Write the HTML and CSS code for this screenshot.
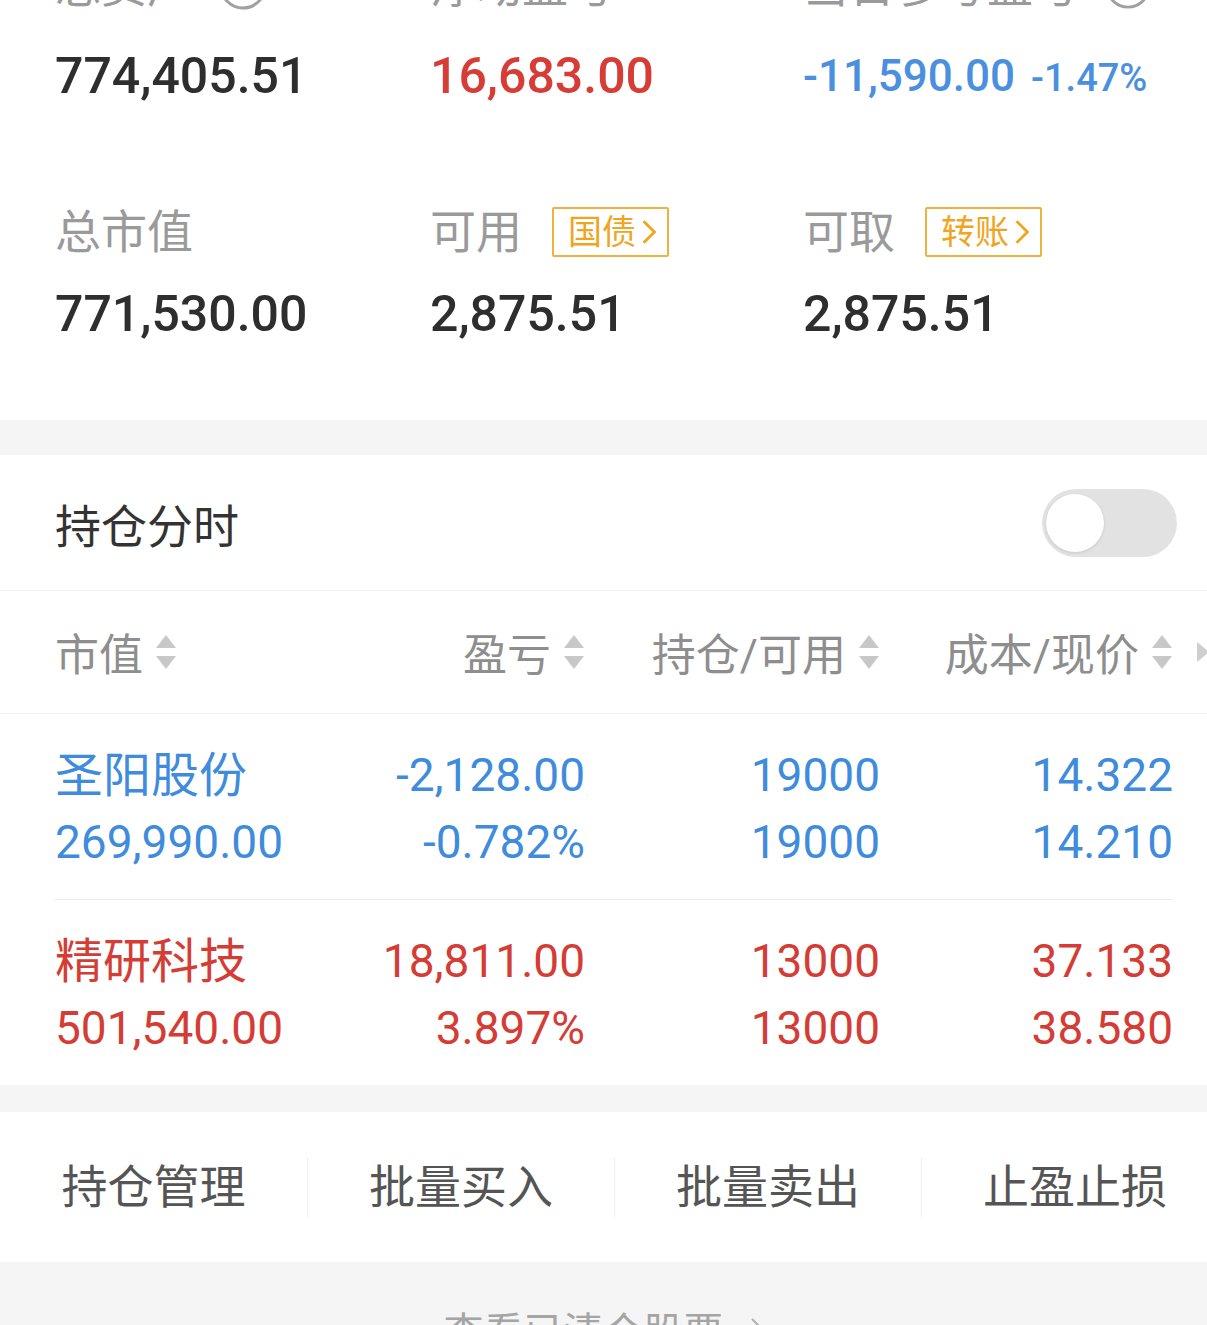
FILE: index.html
```html
<!DOCTYPE html>
<html lang="zh-CN">
<head>
<meta charset="utf-8">
<title>持仓</title>
<link rel="stylesheet" href="styles.css">
</head>
<body>
<div class="page">
  <section class="summary">
    <div class="cell">
      <div class="label">总资产
        <svg class="info" viewBox="0 0 48 48" width="48" height="48"><circle cx="24" cy="24" r="22" fill="none" stroke="#a0a0a0" stroke-width="3"/><path d="M8 24 Q24 40 40 24" fill="none" stroke="#a0a0a0" stroke-width="3"/></svg>
      </div>
      <div class="value v1">774,405.51</div>
    </div>
    <div class="cell">
      <div class="label">浮动盈亏</div>
      <div class="value v1 red">16,683.00</div>
    </div>
    <div class="cell">
      <div class="label">当日参考盈亏
        <svg class="info" viewBox="0 0 48 48" width="46" height="46"><circle cx="24" cy="24" r="22" fill="none" stroke="#a0a0a0" stroke-width="3"/><path d="M17 18 Q17 11 24 11 Q31 11 31 18 Q31 23 24 25 L24 30" fill="none" stroke="#a0a0a0" stroke-width="3"/><circle cx="24" cy="36" r="2.4" fill="#a0a0a0"/></svg>
      </div>
      <div class="value v1 blue"><span class="big">-11,590.00</span><span class="pct">-1.47%</span></div>
    </div>
    <div class="cell">
      <div class="label">总市值</div>
      <div class="value v2">771,530.00</div>
    </div>
    <div class="cell">
      <div class="label">可用<span class="badge">国债<svg viewBox="0 0 14 24" width="16" height="26"><polyline points="2,2 12,12 2,22" fill="none" stroke="#efa51f" stroke-width="2.6"/></svg></span></div>
      <div class="value v2">2,875.51</div>
    </div>
    <div class="cell">
      <div class="label">可取<span class="badge">转账<svg viewBox="0 0 14 24" width="16" height="26"><polyline points="2,2 12,12 2,22" fill="none" stroke="#efa51f" stroke-width="2.6"/></svg></span></div>
      <div class="value v2">2,875.51</div>
    </div>
  </section>

  <div class="band band-a"></div>

  <section class="positions">
    <div class="title-row">
      <span class="title">持仓分时</span>
      <span class="toggle"><span class="knob"></span></span>
    </div>
    <div class="thead">
      <div class="th left">市值<svg class="sort" viewBox="0 0 22 36" width="22" height="36"><polygon points="11,1 21,14 1,14" fill="#c8c8c8"/><polygon points="1,22 21,22 11,35" fill="#c8c8c8"/></svg></div>
      <div class="th">盈亏<svg class="sort" viewBox="0 0 22 36" width="22" height="36"><polygon points="11,1 21,14 1,14" fill="#c8c8c8"/><polygon points="1,22 21,22 11,35" fill="#c8c8c8"/></svg></div>
      <div class="th">持仓/可用<svg class="sort" viewBox="0 0 22 36" width="22" height="36"><polygon points="11,1 21,14 1,14" fill="#c8c8c8"/><polygon points="1,22 21,22 11,35" fill="#c8c8c8"/></svg></div>
      <div class="th">成本/现价<svg class="sort" viewBox="0 0 22 36" width="22" height="36"><polygon points="11,1 21,14 1,14" fill="#c8c8c8"/><polygon points="1,22 21,22 11,35" fill="#c8c8c8"/></svg></div>
      <svg class="more" viewBox="0 0 14 22" width="14" height="22"><polygon points="1,1 13,11 1,21" fill="#cfcfcf"/></svg>
    </div>

    <div class="row blue">
      <div class="col left"><div class="name">圣阳股份</div><div>269,990.00</div></div>
      <div class="col"><div>-2,128.00</div><div>-0.782%</div></div>
      <div class="col"><div>19000</div><div>19000</div></div>
      <div class="col"><div>14.322</div><div>14.210</div></div>
    </div>
    <div class="row red">
      <div class="col left"><div class="name">精研科技</div><div>501,540.00</div></div>
      <div class="col"><div>18,811.00</div><div>3.897%</div></div>
      <div class="col"><div>13000</div><div>13000</div></div>
      <div class="col"><div>37.133</div><div>38.580</div></div>
    </div>
  </section>

  <div class="band band-b"></div>

  <nav class="actions">
    <div class="act">持仓管理</div>
    <div class="act">批量买入</div>
    <div class="act">批量卖出</div>
    <div class="act">止盈止损</div>
  </nav>

  <footer class="footer">
    <span>查看已清仓股票</span>
    <svg viewBox="0 0 14 24" width="14" height="24"><polyline points="2,2 12,12 2,22" fill="none" stroke="#b0b0b0" stroke-width="2"/></svg>
  </footer>
</div>
</body>
</html>
```
FILE: styles.css
```css
* { box-sizing: border-box; }
html, body {
  margin: 0;
  padding: 0;
  background: #f5f5f5;
  overflow: hidden;
}
body {
  font-family: Roboto, "Noto Sans CJK SC", sans-serif;
  color: #333;
}
.page {
  width: 1207px;
  overflow: hidden;
}

/* summary */
.summary {
  display: grid;
  grid-template-columns: 375px 373px 1fr;
  row-gap: 98px;
  margin-top: -42px;
  padding: 0 0 76px 55px;
  background: #fff;
}
.cell {
  display: flex;
  flex-direction: column;
}
.label {
  display: flex;
  align-items: center;
  height: 56px;
  font-size: 46px;
  line-height: 56px;
  color: #9a9a9a;
  white-space: nowrap;
}
.info {
  margin-left: 26px;
}
.value {
  height: 60px;
  font-size: 50px;
  line-height: 60px;
  font-weight: 500;
  color: #2e2e2e;
  white-space: nowrap;
}
.v1 { margin-top: 32px; }
.v2 { margin-top: 24px; }
.value.red { color: #d53d36; }
.value.blue { color: #4a90df; display: flex; align-items: baseline; }
.value .big { font-size: 44px; }
.value .pct { font-size: 38px; margin-left: 16px; }

.badge {
  display: inline-flex;
  align-items: center;
  height: 50px;
  margin-left: 30px;
  padding: 0 10px 0 14px;
  border: 2px solid #f0b23e;
  border-radius: 2px;
  font-size: 34px;
  line-height: 46px;
  color: #efa51f;
}
.badge svg { margin-left: 5px; }

/* bands */
.band { background: #f5f5f5; }
.band-a { height: 35px; }
.band-b { height: 27px; }

/* positions */
.positions { background: #fff; }
.title-row {
  display: flex;
  align-items: center;
  justify-content: space-between;
  height: 136px;
  padding: 0 30px 0 55px;
  border-bottom: 1px solid #f0f0f0;
}
.title {
  font-size: 46px;
  color: #333;
}
.toggle {
  position: relative;
  width: 135px;
  height: 68px;
  border-radius: 34px;
  background: #e2e2e2;
}
.knob {
  position: absolute;
  left: 4px;
  top: 5px;
  width: 58px;
  height: 58px;
  border-radius: 50%;
  background: #fff;
  box-shadow: 0 1px 3px rgba(0, 0, 0, 0.12);
}
.thead {
  position: relative;
  display: grid;
  grid-template-columns: 235px 295px 295px 293px;
  align-items: center;
  height: 123px;
  padding-left: 55px;
  border-bottom: 1px solid #f0f0f0;
}
.th {
  display: flex;
  align-items: center;
  justify-content: flex-end;
  font-size: 44px;
  color: #8e8e8e;
  white-space: nowrap;
}
.th.left { justify-content: flex-start; }
.sort { margin-left: 12px; }
.more {
  position: absolute;
  left: 1196px;
  top: 50px;
}

.row {
  display: grid;
  grid-template-columns: 235px 295px 295px 293px;
  margin-left: 55px;
  width: 1118px;
  padding: 28px 0 23px;
  font-size: 46px;
  line-height: 67px;
  white-space: nowrap;
}
.row + .row { border-top: 1px solid #ececec; }
.row.blue { color: #3f8bdc; }
.row.red { color: #d43d35; }
.col { text-align: right; }
.col.left { text-align: left; }
.name { font-size: 48px; }

/* actions */
.actions {
  display: grid;
  grid-template-columns: repeat(4, 307px);
  align-items: center;
  height: 150px;
  background: #fff;
}
.act {
  text-align: center;
  font-size: 46px;
  line-height: 60px;
  color: #555;
  white-space: nowrap;
}
.act + .act { border-left: 1px solid #f0f0f0; }

/* footer */
.footer {
  display: flex;
  align-items: center;
  justify-content: center;
  gap: 26px;
  height: 120px;
  padding: 14px 0 0 0;
  font-size: 40px;
  color: #a5a5a5;
  background: #f5f5f5;
}
```
